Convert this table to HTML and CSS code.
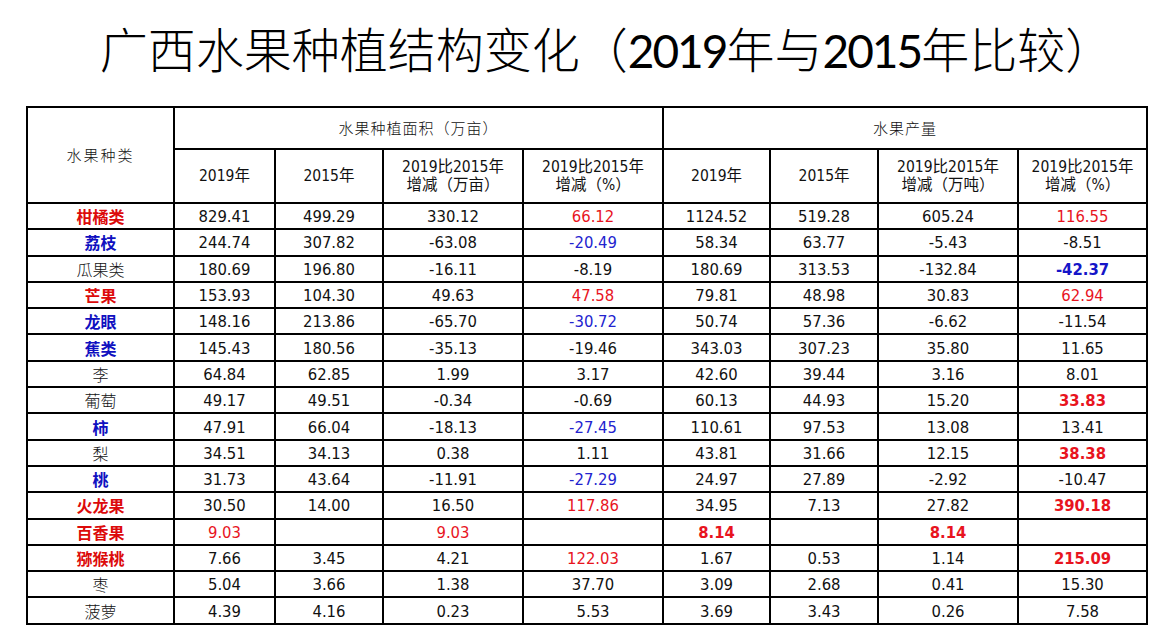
FILE: index.html
```html
<!DOCTYPE html>
<html lang="zh-CN">
<head>
<meta charset="utf-8">
<title>广西水果种植结构变化</title>
<link rel="stylesheet" href="styles.css">
</head>
<body>
<div class="page">
  <h1 class="title">广西水果种植结构变化（<span class="tnum">2019</span>年与<span class="tnum">2015</span>年比较）</h1>
  <table class="data">
    <colgroup>
      <col class="c-name">
      <col class="c-a"><col class="c-b"><col class="c-c"><col class="c-d">
      <col class="c-e"><col class="c-f"><col class="c-g"><col class="c-h">
    </colgroup>
    <thead>
      <tr class="h1">
        <th rowspan="2" class="cjk head-name">水果种类</th>
        <th colspan="4" class="cjk">水果种植面积（万亩）</th>
        <th colspan="4" class="cjk">水果产量</th>
      </tr>
      <tr class="h2">
        <th>2019年</th>
        <th>2015年</th>
        <th>2019比2015年<br>增减（万亩）</th>
        <th>2019比2015年<br>增减（%）</th>
        <th>2019年</th>
        <th>2015年</th>
        <th>2019比2015年<br>增减（万吨）</th>
        <th>2019比2015年<br>增减（%）</th>
      </tr>
    </thead>
    <tbody>
      <tr><td class="name red-b">柑橘类</td><td>829.41</td><td>499.29</td><td>330.12</td><td class="red">66.12</td><td>1124.52</td><td>519.28</td><td>605.24</td><td class="red">116.55</td></tr>
      <tr><td class="name blue-b">荔枝</td><td>244.74</td><td>307.82</td><td>-63.08</td><td class="blue">-20.49</td><td>58.34</td><td>63.77</td><td>-5.43</td><td>-8.51</td></tr>
      <tr><td class="name">瓜果类</td><td>180.69</td><td>196.80</td><td>-16.11</td><td>-8.19</td><td>180.69</td><td>313.53</td><td>-132.84</td><td class="blue-num-b">-42.37</td></tr>
      <tr><td class="name red-b">芒果</td><td>153.93</td><td>104.30</td><td>49.63</td><td class="red">47.58</td><td>79.81</td><td>48.98</td><td>30.83</td><td class="red">62.94</td></tr>
      <tr><td class="name blue-b">龙眼</td><td>148.16</td><td>213.86</td><td>-65.70</td><td class="blue">-30.72</td><td>50.74</td><td>57.36</td><td>-6.62</td><td>-11.54</td></tr>
      <tr><td class="name blue-b">蕉类</td><td>145.43</td><td>180.56</td><td>-35.13</td><td>-19.46</td><td>343.03</td><td>307.23</td><td>35.80</td><td>11.65</td></tr>
      <tr><td class="name">李</td><td>64.84</td><td>62.85</td><td>1.99</td><td>3.17</td><td>42.60</td><td>39.44</td><td>3.16</td><td>8.01</td></tr>
      <tr><td class="name">葡萄</td><td>49.17</td><td>49.51</td><td>-0.34</td><td>-0.69</td><td>60.13</td><td>44.93</td><td>15.20</td><td class="red-num-b">33.83</td></tr>
      <tr><td class="name blue-b">柿</td><td>47.91</td><td>66.04</td><td>-18.13</td><td class="blue">-27.45</td><td>110.61</td><td>97.53</td><td>13.08</td><td>13.41</td></tr>
      <tr><td class="name">梨</td><td>34.51</td><td>34.13</td><td>0.38</td><td>1.11</td><td>43.81</td><td>31.66</td><td>12.15</td><td class="red-num-b">38.38</td></tr>
      <tr><td class="name blue-b">桃</td><td>31.73</td><td>43.64</td><td>-11.91</td><td class="blue">-27.29</td><td>24.97</td><td>27.89</td><td>-2.92</td><td>-10.47</td></tr>
      <tr><td class="name red-b">火龙果</td><td>30.50</td><td>14.00</td><td>16.50</td><td class="red">117.86</td><td>34.95</td><td>7.13</td><td>27.82</td><td class="red-num-b">390.18</td></tr>
      <tr><td class="name red-b">百香果</td><td class="red">9.03</td><td></td><td class="red">9.03</td><td></td><td class="red-num-b">8.14</td><td></td><td class="red-num-b">8.14</td><td></td></tr>
      <tr><td class="name red-b">猕猴桃</td><td>7.66</td><td>3.45</td><td>4.21</td><td class="red">122.03</td><td>1.67</td><td>0.53</td><td>1.14</td><td class="red-num-b">215.09</td></tr>
      <tr><td class="name">枣</td><td>5.04</td><td>3.66</td><td>1.38</td><td>37.70</td><td>3.09</td><td>2.68</td><td>0.41</td><td>15.30</td></tr>
      <tr><td class="name">菠萝</td><td>4.39</td><td>4.16</td><td>0.23</td><td>5.53</td><td>3.69</td><td>3.43</td><td>0.26</td><td>7.58</td></tr>
    </tbody>
  </table>
</div>
</body>
</html>
```
FILE: styles.css
```css
html, body {
  margin: 0;
  padding: 0;
  background: #ffffff;
}

.page {
  width: 1173px;
  color: #111;
}

.title {
  margin: 0;
  padding: 17px 0 29px 40px;
  height: 60px;
  line-height: 60px;
  text-align: center;
  font-family: "Noto Sans CJK SC", sans-serif;
  font-weight: 200;
  font-size: 48px;
  color: #000;
  white-space: nowrap;
}

.title .tnum {
  font-family: "Lato", "Open Sans", sans-serif;
  font-weight: 400;
  letter-spacing: -2px;
  font-size: 46px;
}

.data {
  margin-left: 26px;
  border-collapse: collapse;
  table-layout: fixed;
  width: 1122px;
  font-family: "DejaVu Sans Condensed", "DejaVu Sans", "Noto Sans CJK SC", sans-serif;
  font-stretch: condensed;
  font-size: 16.5px;
  color: #111;
}

.c-name { width: 147px; }
.c-a { width: 101px; }
.c-b { width: 108px; }
.c-c { width: 140px; }
.c-d { width: 140px; }
.c-e { width: 107px; }
.c-f { width: 108px; }
.c-g { width: 140px; }
.c-h { width: 129px; }

.data th,
.data td {
  border: 2px solid #000;
  padding: 0;
  text-align: center;
  vertical-align: middle;
  white-space: nowrap;
}

.data th {
  font-weight: 400;
  line-height: 18px;
  font-size: 15.5px;
}

.data .cjk {
  font-family: "Noto Sans CJK SC", sans-serif;
  font-weight: 300;
  font-size: 15px;
  letter-spacing: 1px;
}

.data .head-name {
  letter-spacing: 2px;
}

.h1 { height: 42px; }
.h2 { height: 54px; }

.data tbody tr { height: 26.3px; }

.data td {
  line-height: 20px;
  padding-top: 2px;
}

.data .name {
  font-family: "Noto Sans CJK SC", sans-serif;
  font-weight: 300;
  font-size: 16px;
  color: #111;
  padding-top: 0;
}

.data .name.red-b {
  color: #dc0a0a;
  font-weight: 700;
}

.data .name.blue-b {
  color: #1010c0;
  font-weight: 700;
}

.red { color: #e8141e; }
.blue { color: #2323cf; }

.red-num-b {
  color: #e8141e;
  font-weight: 700;
}

.blue-num-b {
  color: #1515c8;
  font-weight: 700;
}
```
